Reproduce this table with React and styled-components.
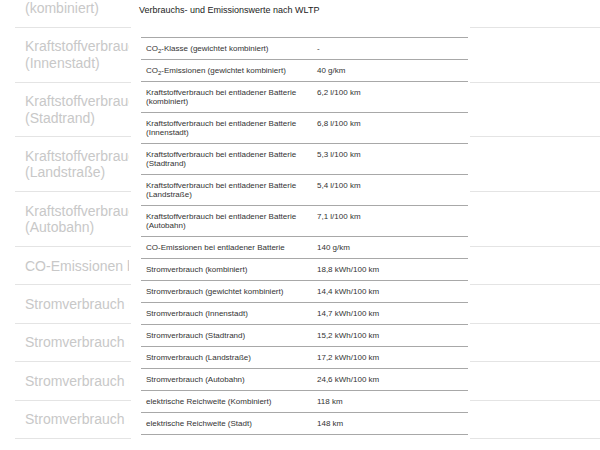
import React from "react";
import styled, { createGlobalStyle } from "styled-components";

const GlobalStyle = createGlobalStyle`
  html, body {
    margin: 0;
    padding: 0;
    background: #fff;
    overflow: hidden;
  }
  body {
    font-family: "Liberation Sans", Arial, sans-serif;
  }
`;

const backgroundRows = [
  ["Kraftstoffverbrauch", "(kombiniert)"],
  ["Kraftstoffverbrauch", "(Innenstadt)"],
  ["Kraftstoffverbrauch", "(Stadtrand)"],
  ["Kraftstoffverbrauch", "(Landstraße)"],
  ["Kraftstoffverbrauch", "(Autobahn)"],
  ["CO-Emissionen bei entladener Batterie"],
  ["Stromverbrauch (kombiniert)"],
  ["Stromverbrauch (gewichtet kombiniert)"],
  ["Stromverbrauch (Innenstadt)"],
  ["Stromverbrauch (Stadtrand)"],
  ["Stromverbrauch (Landstraße)"],
];

const co2 = (rest) => (
  <>
    CO<sub>2</sub>
    {rest}
  </>
);

const values = [
  [co2("-Klasse (gewichtet kombiniert)"), "-"],
  [co2("-Emissionen (gewichtet kombiniert)"), "40 g/km"],
  ["Kraftstoffverbrauch bei entladener Batterie (kombiniert)", "6,2 l/100 km"],
  ["Kraftstoffverbrauch bei entladener Batterie (Innenstadt)", "6,8 l/100 km"],
  ["Kraftstoffverbrauch bei entladener Batterie (Stadtrand)", "5,3 l/100 km"],
  ["Kraftstoffverbrauch bei entladener Batterie (Landstraße)", "5,4 l/100 km"],
  ["Kraftstoffverbrauch bei entladener Batterie (Autobahn)", "7,1 l/100 km"],
  ["CO-Emissionen bei entladener Batterie", "140 g/km"],
  ["Stromverbrauch (kombiniert)", "18,8 kWh/100 km"],
  ["Stromverbrauch (gewichtet kombiniert)", "14,4 kWh/100 km"],
  ["Stromverbrauch (Innenstadt)", "14,7 kWh/100 km"],
  ["Stromverbrauch (Stadtrand)", "15,2 kWh/100 km"],
  ["Stromverbrauch (Landstraße)", "17,2 kWh/100 km"],
  ["Stromverbrauch (Autobahn)", "24,6 kWh/100 km"],
  ["elektrische Reichweite (Kombiniert)", "118 km"],
  ["elektrische Reichweite (Stadt)", "148 km"],
];

function App() {
  return (
    <Page>
      <GlobalStyle />
      <BackList>
        {backgroundRows.map((lines, i) => (
          <BackRow key={i}>
            <BackLabel>
              {lines.map((l, j) => (
                <div key={j}>{l}</div>
              ))}
            </BackLabel>
          </BackRow>
        ))}
      </BackList>

      <Modal>
        <Title>Verbrauchs- und Emissionswerte nach WLTP</Title>
        <Table>
          <tbody>
            {values.map(([label, value], i) => (
              <tr key={i}>
                <LabelCell>{label}</LabelCell>
                <ValueCell>{value}</ValueCell>
              </tr>
            ))}
          </tbody>
        </Table>
      </Modal>
    </Page>
  );
}

const Page = styled.div`
  position: relative;
  width: 600px;
  height: 450px;
  overflow: hidden;
  background: #fff;
`;

const BackList = styled.div`
  display: flex;
  flex-direction: column;
  margin: -27px 0 0 15px;
`;

const BackRow = styled.div`
  display: flex;
  align-items: center;
  padding: 10.5px 0;
  border-bottom: 1px solid #e4e4e4;
`;

const BackLabel = styled.div`
  width: 104px;
  padding-left: 10px;
  overflow: hidden;
  white-space: nowrap;
  font-size: 14px;
  line-height: 16.4px;
  color: #c8c8c8;
`;

const Modal = styled.div`
  position: absolute;
  top: 0;
  bottom: 0;
  left: 131px;
  width: 339px;
  background: #fff;
  padding: 5px 2px 0 10px;
  box-sizing: border-box;
`;

const Title = styled.div`
  font-size: 9px;
  line-height: 11px;
  color: #222;
  margin: 0 0 21px -2px;
`;

const Table = styled.table`
  width: 100%;
  border-collapse: collapse;
  border-top: 1px solid #a8a8a8;
  font-size: 8px;
  line-height: 9px;
  color: #333;

  tr {
    border-bottom: 1px solid #a8a8a8;
  }

  sub {
    font-size: 6px;
    line-height: 0;
    vertical-align: -2px;
  }
`;

const LabelCell = styled.td`
  width: 161px;
  padding: 6px 5px;
  vertical-align: top;
`;

const ValueCell = styled.td`
  padding: 6px 5px;
  vertical-align: top;
`;

export default App;
